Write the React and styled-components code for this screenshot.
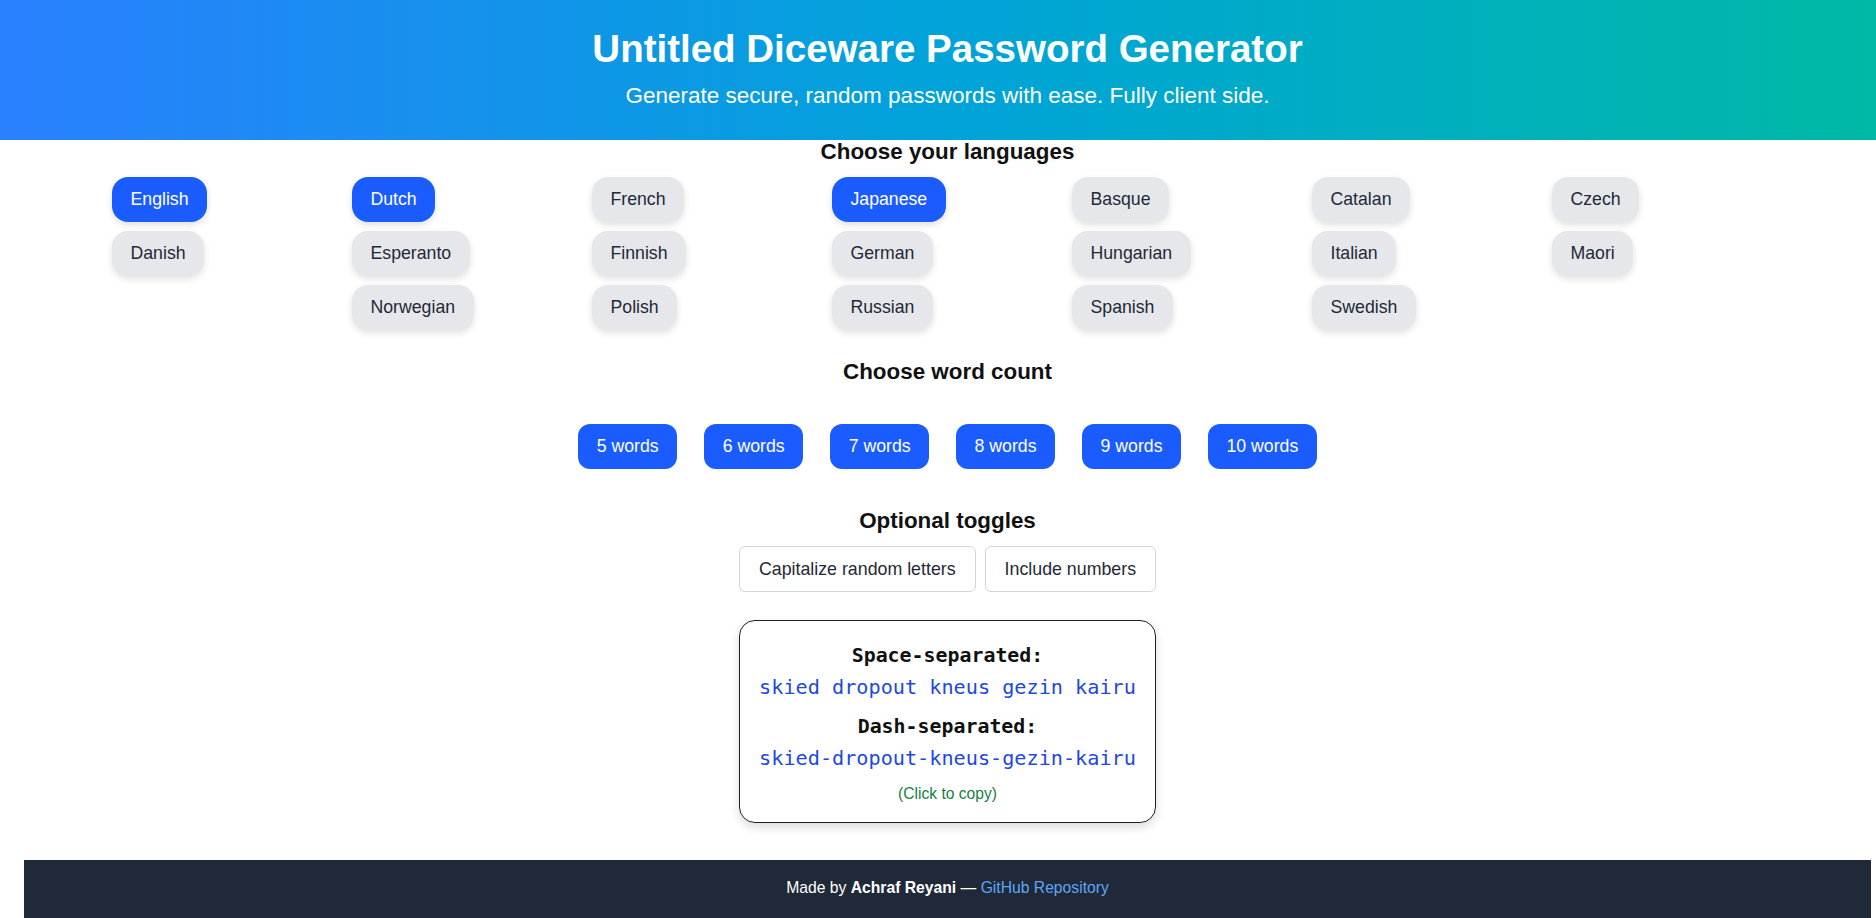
import React, { useState } from "react";
import styled, { createGlobalStyle } from "styled-components";

const GlobalStyle = createGlobalStyle`
  body {
    margin: 0;
    background: #ffffff;
    font-family: "Liberation Sans", Arial, sans-serif;
    color: #111827;
  }
`;

const Header = styled.header`
  box-sizing: border-box;
  height: 140px;
  padding: 27px 5px 0 24px;
  background: linear-gradient(90deg, #2a80ff 0%, #00a3d9 50%, #00b9a6 100%);
  color: #ffffff;
  text-align: center;

  h1 {
    margin: 0;
    font-size: 38.5px;
    font-weight: 700;
    line-height: 44px;
  }

  p {
    margin: 13px 0 0;
    font-size: 22.5px;
    line-height: 24px;
  }
`;

const Main = styled.main`
  padding: 0 5px 0 24px;
  display: flex;
  flex-direction: column;
  align-items: center;
`;

const SectionTitle = styled.h2`
  margin: ${(p) => p.$top || 0}px 0 0;
  font-size: 22.4px;
  font-weight: 700;
  line-height: 24px;
  color: #111111;
  text-align: center;
`;

const LangGrid = styled.div`
  align-self: stretch;
  margin-top: 13px;
  padding-left: 88px;
  display: grid;
  grid-template-columns: repeat(7, 240px);
  row-gap: 9px;
  justify-items: start;
`;

const LangButton = styled.button`
  border: none;
  border-radius: 16px;
  padding: 12px 18.5px;
  font-family: inherit;
  font-size: 17.7px;
  line-height: 21px;
  cursor: pointer;
  background: ${(p) => (p.$active ? "#1a5cff" : "#e5e7eb")};
  color: ${(p) => (p.$active ? "#ffffff" : "#1f2937")};
  box-shadow: 0 3px 7px rgba(0, 0, 0, 0.12);
`;

const WordRow = styled.div`
  margin-top: 40px;
  display: flex;
  gap: 27px;
`;

const WordButton = styled.button`
  border: none;
  border-radius: 12px;
  padding: 12px 18.5px;
  font-family: inherit;
  font-size: 17.7px;
  line-height: 21px;
  background: #1a5cff;
  color: #ffffff;
  cursor: pointer;
`;

const ToggleRow = styled.div`
  margin-top: 13px;
  display: flex;
  gap: 9px;
`;

const ToggleButton = styled.button`
  border: 1px solid #d1d5db;
  border-radius: 6px;
  padding: 11.5px 19px;
  font-family: inherit;
  font-size: 17.8px;
  line-height: 21px;
  background: ${(p) => (p.$on ? "#eef2ff" : "#ffffff")};
  color: #1f2937;
  cursor: pointer;
`;

const ResultCard = styled.div`
  margin-top: 28px;
  padding: 23px 19px 19px;
  border: 1px solid #1f1f1f;
  border-radius: 16px;
  box-shadow: 0 4px 10px rgba(0, 0, 0, 0.15);
  text-align: center;
  cursor: pointer;
`;

const Label = styled.div`
  font-family: "DejaVu Sans Mono", "Liberation Mono", monospace;
  font-size: 19.9px;
  font-weight: 700;
  line-height: 24px;
  color: #111111;
  margin-top: ${(p) => p.$top || 0}px;
`;

const Phrase = styled.div`
  margin-top: 7px;
  font-family: "DejaVu Sans Mono", "Liberation Mono", monospace;
  font-size: 20.2px;
  line-height: 24px;
  color: #2148e0;
  white-space: nowrap;
`;

const CopyHint = styled.div`
  margin-top: 15px;
  font-size: 15.6px;
  line-height: 18px;
  color: #15803d;
`;

const Footer = styled.footer`
  margin: 37px 5px 0 24px;
  padding: 19px 0 30px;
  background: #1f2937;
  color: #ffffff;
  text-align: center;
  font-size: 15.7px;
  line-height: 18px;

  a {
    color: #60a5fa;
    text-decoration: none;
  }
`;

const languageRows = [
  ["English", "Dutch", "French", "Japanese", "Basque", "Catalan", "Czech"],
  ["Danish", "Esperanto", "Finnish", "German", "Hungarian", "Italian", "Maori"],
  [null, "Norwegian", "Polish", "Russian", "Spanish", "Swedish"],
];

const wordCounts = [5, 6, 7, 8, 9, 10];
const words = ["skied", "dropout", "kneus", "gezin", "kairu"];

export default function App() {
  const [selected, setSelected] = useState(["English", "Dutch", "Japanese"]);
  const [caps, setCaps] = useState(false);
  const [nums, setNums] = useState(false);

  const toggleLang = (lang) =>
    setSelected((s) => (s.includes(lang) ? s.filter((l) => l !== lang) : [...s, lang]));

  return (
    <>
      <GlobalStyle />
      <Header>
        <h1>Untitled Diceware Password Generator</h1>
        <p>Generate secure, random passwords with ease. Fully client side.</p>
      </Header>
      <Main>
        <SectionTitle>Choose your languages</SectionTitle>
        <LangGrid>
          {languageRows.flat().map((lang, i) =>
            lang ? (
              <LangButton
                key={lang}
                $active={selected.includes(lang)}
                onClick={() => toggleLang(lang)}
              >
                {lang}
              </LangButton>
            ) : (
              <span key={"empty" + i} />
            )
          )}
        </LangGrid>

        <SectionTitle $top={30}>Choose word count</SectionTitle>
        <WordRow>
          {wordCounts.map((n) => (
            <WordButton key={n}>{n} words</WordButton>
          ))}
        </WordRow>

        <SectionTitle $top={40}>Optional toggles</SectionTitle>
        <ToggleRow>
          <ToggleButton $on={caps} onClick={() => setCaps(!caps)}>
            Capitalize random letters
          </ToggleButton>
          <ToggleButton $on={nums} onClick={() => setNums(!nums)}>
            Include numbers
          </ToggleButton>
        </ToggleRow>

        <ResultCard>
          <Label>Space-separated:</Label>
          <Phrase>{words.join(" ")}</Phrase>
          <Label $top={16}>Dash-separated:</Label>
          <Phrase>{words.join("-")}</Phrase>
          <CopyHint>(Click to copy)</CopyHint>
        </ResultCard>
      </Main>
      <Footer>
        Made by <strong>Achraf Reyani</strong> — <a href="#">GitHub Repository</a>
      </Footer>
    </>
  );
}
